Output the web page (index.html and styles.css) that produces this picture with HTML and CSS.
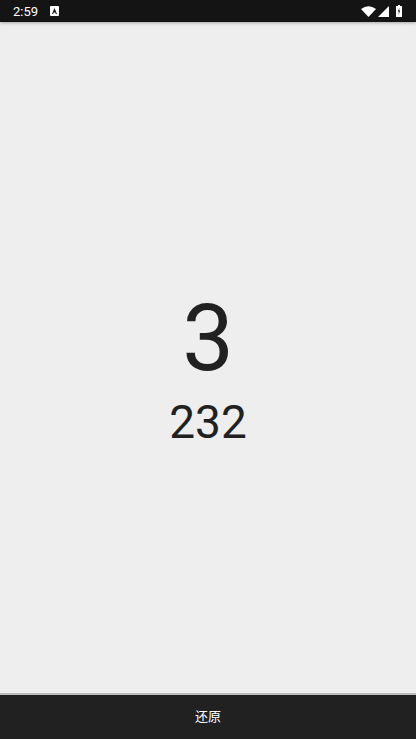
FILE: index.html
```html
<!DOCTYPE html>
<html lang="en">
<head>
    <meta charset="UTF-8">
    <meta name="viewport" content="width=device-width, initial-scale=1.0">
    <title>Counter</title>
    <link rel="stylesheet" href="styles.css">
</head>
<body>
    <div class="status-bar">
        <span class="status-time">2:59</span>
        <svg class="status-a" width="9" height="10" viewBox="0 0 9 10">
            <rect width="9" height="10" rx="1" fill="#fff"/>
            <path d="M4.5 2 L2 8 H3.2 L3.7 6.6 H5.3 L5.8 8 H7 Z" fill="#141414"/>
        </svg>
        <div class="status-icons">
            <svg class="status-wifi" width="15" height="11" viewBox="0 0 15 11"><path d="M0 3 Q7.5 -2.5 15 3 L7.5 11 Z" fill="#fff"/></svg>
            <svg class="status-signal" width="11" height="11" viewBox="0 0 11 11"><path d="M11 0 V11 H0 Z" fill="#fff"/></svg>
            <svg width="6" height="12" viewBox="0 0 6 12"><path d="M2 0 H4 V1 H6 V12 H0 V1 H2 Z" fill="#fff"/><path d="M3.4 3 L1.8 6.6 H2.8 L2.6 9.4 L4.2 5.6 H3.2 Z" fill="#141414"/></svg>
        </div>
    </div>
    <main class="counter">
        <div class="counter-big">3</div>
        <div class="counter-small">232</div>
    </main>
    <button class="restore-button">还原</button>
</body>
</html>
```

FILE: styles.css
```css
body {
    margin: 0;
    height: 739px;
    display: flex;
    flex-flow: column nowrap;
    background-color: #eee;
    font-family: Roboto, "Noto Sans CJK SC", sans-serif;
    overflow: hidden;
}

.status-bar {
    height: 22px;
    padding: 0 14px 0 13px;
    display: flex;
    align-items: center;
    flex-shrink: 0;
    background-color: #141414;
    color: #fff;
    box-shadow: 0 1px 3px rgba(0, 0, 0, 0.3);
}
.status-time {
    font-size: 13px;
}
.status-a {
    margin-left: 12px;
}
.status-icons {
    margin-left: auto;
    display: flex;
    align-items: center;
}
.status-signal {
    margin: 0 7px 0 2px;
}

.counter {
    flex: 1;
    padding-top: 18px;
    display: flex;
    flex-flow: column nowrap;
    align-items: center;
    justify-content: center;
    color: #212121;
}
.counter-big {
    font-size: 92px;
    line-height: 110px;
}
.counter-small {
    font-size: 46px;
    line-height: 56px;
}

.restore-button {
    height: 46px;
    flex-shrink: 0;
    padding: 0 0 3px 0;
    background-color: #212121;
    color: #fff;
    border: none;
    border-top: 2px solid #bbb;
    font-family: inherit;
    font-size: 13px;
}
```
